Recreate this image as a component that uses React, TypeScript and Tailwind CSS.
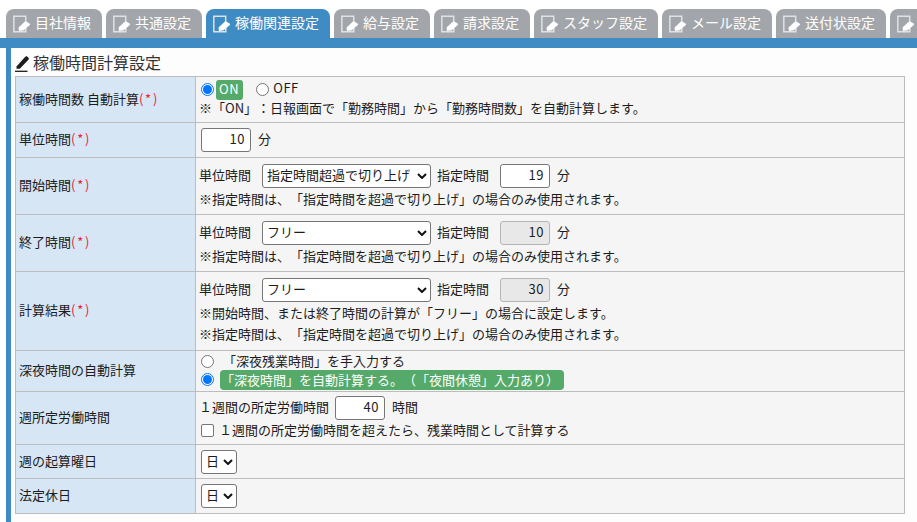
import type { ReactNode } from 'react';

const FONT = '[font-family:"Noto_Sans_CJK_JP","Liberation_Sans",sans-serif]';

const tabs = [
  { name: '目社情報', width: 'w-[96px]' },
  { name: '共通設定', width: 'w-[96px]' },
  { name: '稼働関連設定', width: 'w-[124px]', active: true },
  { name: '給与設定', width: 'w-[96px]' },
  { name: '請求設定', width: 'w-[96px]' },
  { name: 'スタッフ設定', width: 'w-[124px]' },
  { name: 'メール設定', width: 'w-[110px]' },
  { name: '送付状設定', width: 'w-[110px]' },
  { name: '', width: 'w-[40px]' }
];

const TabIcon = () => (
  <svg width="18" height="18" viewBox="0 0 18 18" className="shrink-0">
    <path d="M12.700 6V1.200H.8v15.600h12V13" fill="none" stroke="#dfe2e5" strokeWidth="1.5" />
    <path d="M5.500 12.500l6.500-6 .8-.6 4.400 3.200-.4.900-6 5.200-4.800.8z" fill="#fff" />
  </svg>
);

const Pencil = () => (
  <svg width="14" height="17" viewBox="0 0 14 17" className="shrink-0">
    <path d="M1.500 11.500L10 2l1.500-1L14 3.200l-.6 1.600-8.600 9H1.500z" fill="#1c1c1c" />
    <path d="M0 16.300h12.500" stroke="#1c1c1c" strokeWidth="1.300" />
  </svg>
);

const Req = () => <span className="tracking-[1.8px] text-[#f0203a]">(*)</span>;

const Row = ({ label, h, children }: { label: ReactNode; h: string; children: ReactNode }) => (
  <div className={`flex border-b border-[#bdbdbd] ${h}`}>
    <div className="flex w-[180px] shrink-0 items-center border-r border-[#bdbdbd] bg-[#d6e6f4] pb-[3px] pl-[3px]">
      <span>{label}</span>
    </div>
    <div className="flex min-w-0 grow flex-col justify-center bg-[#f5f5f5] pl-[3px]">{children}</div>
  </div>
);

const Radio = ({ on }: { on?: boolean }) => (
  <span
    className={`flex h-[13px] w-[13px] shrink-0 items-center justify-center rounded-full border bg-white ${
      on ? 'border-[#0075ff]' : 'border-[#767676]'
    }`}
  >
    {on && <span className="h-[9px] w-[9px] rounded-full bg-[#0075ff]" />}
  </span>
);

const Chevron = () => (
  <svg width="10" height="6" viewBox="0 0 10 6" className="shrink-0">
    <path d="M1 1l4 4 4-4" fill="none" stroke="#111" strokeWidth="2" />
  </svg>
);

// 入力欄の文字は枠の中央より少し上に出す
const Select = ({ text, w }: { text: string; w: string }) => (
  <div
    className={`flex h-[24px] items-center justify-between rounded-[3px] border border-[#767676] bg-white pl-[4px] pr-[3px] ${w}`}
  >
    <span className="whitespace-nowrap pb-[3px]">{text}</span>
    <Chevron />
  </div>
);

const NumBox = ({ value, disabled, w = 'w-[50px]' }: { value: string; disabled?: boolean; w?: string }) => (
  <div
    className={`flex h-[24px] items-center justify-end rounded-[3px] border pb-[3px] pr-[5px] tracking-[0.5px] ${w} ${
      disabled ? 'border-[#b5b5b5] bg-[#e8e8e8]' : 'border-[#767676] bg-white'
    }`}
  >
    {value}
  </div>
);

const UnitLine = ({ select, value, disabled }: { select: string; value: string; disabled?: boolean }) => (
  <div className="flex h-[24px] items-center">
    <span className="w-[63px] pb-[3px]">単位時間</span>
    <Select text={select} w="w-[169px]" />
    <span className="ml-[6px] w-[63px] pb-[3px]">指定時間</span>
    <NumBox value={value} disabled={disabled} />
    <span className="ml-[7px] pb-[3px]">分</span>
  </div>
);

const Note = ({ children }: { children: ReactNode }) => (
  <div className="mt-[2px] h-[19px] whitespace-nowrap leading-[17px]">{children}</div>
);

const NOTE_TEXT = '※指定時間は、「指定時間を超過で切り上げ」の場合のみ使用されます。';

export default function App() {
  return (
    <div
      className={`h-[522px] w-[917px] overflow-hidden bg-white text-[13px] leading-[19px] text-[#1c1c1c] [text-spacing-trim:space-all] ${FONT}`}
    >
      <div className="flex h-[38px] gap-[4px] pl-[6px] pt-[9px]">
        {tabs.map((tab, i) => (
          <div
            key={i}
            className={`flex h-[29px] shrink-0 items-center gap-[4px] rounded-t-[8px] pl-[7px] text-[14px] text-white ${tab.width} ${
              tab.active ? 'bg-[#3f8cc4]' : 'bg-[#a2a6aa]'
            }`}
          >
            <TabIcon />
            <span className="whitespace-nowrap pb-[2px]">{tab.name}</span>
          </div>
        ))}
      </div>

      <div className="h-[10px] bg-[#3f8cc4]" />

      <div className="ml-[6px] h-[474px] border-l-[5px] border-[#3f8cc4] bg-[#fdfdfd] pl-[4px]">
        <div className="flex h-[28px] items-center gap-[4px] pt-[3px] text-[16px] text-[#333]">
          <Pencil />
          <span className="pb-[2px]">稼働時間計算設定</span>
        </div>

        <div className="w-[890px] border-l border-r border-t border-[#bdbdbd]">
          <Row label={<>稼働時間数 自動計算<Req /></>} h="h-[46px]">
            <div className="mb-[1px] flex h-[20px] items-center pl-[2px]">
              <Radio on />
              <span className="ml-[2px] h-[20px] rounded-[3px] bg-[#55aa6a] pl-[3px] pr-[4px] leading-[17px] tracking-[0.6px] text-white">ON</span>
              <span className="ml-[13px]"><Radio /></span>
              <span className="ml-[4px] pb-[4px] tracking-[0.5px]">OFF</span>
            </div>
            <div className="h-[19px] whitespace-nowrap leading-[14px]">
              ※「ON」：日報画面で「勤務時間」から「勤務時間数」を自動計算します。
            </div>
          </Row>

          <Row label={<>単位時間<Req /></>} h="h-[35px]">
            <div className="flex items-center pl-[2px]">
              <NumBox value="10" w="w-[50px]" />
              <span className="ml-[7px] pb-[3px]">分</span>
            </div>
          </Row>

          <Row label={<>開始時間<Req /></>} h="h-[57px]">
            <UnitLine select="指定時間超過で切り上げ" value="19" />
            <Note>{NOTE_TEXT}</Note>
          </Row>

          <Row label={<>終了時間<Req /></>} h="h-[57px]">
            <UnitLine select="フリー" value="10" disabled />
            <Note>{NOTE_TEXT}</Note>
          </Row>

          <Row label={<>計算結果<Req /></>} h="h-[79px]">
            <UnitLine select="フリー" value="30" disabled />
            <Note>※開始時間、または終了時間の計算が「フリー」の場合に設定します。</Note>
            <Note>{NOTE_TEXT}</Note>
          </Row>

          <Row label="深夜時間の自動計算" h="h-[41px]">
            <div className="flex h-[17px] items-center pl-[2px]">
              <Radio />
              <span className="ml-[9px] pb-[2px]">「深夜残業時間」を手入力する</span>
            </div>
            <div className="flex h-[19px] items-center pl-[2px]">
              <Radio on />
              <span className="ml-[6px] rounded-[4px] bg-[#55aa6a] pb-[1px] pl-[1px] pr-[5px] text-white">
                「深夜時間」を自動計算する。（「夜間休憩」入力あり）
              </span>
            </div>
          </Row>

          <Row label="週所定労働時間" h="h-[53px]">
            <div className="flex h-[24px] items-center">
              <span className="pb-[3px]">１週間の所定労働時間</span>
              <span className="ml-[6px]"><NumBox value="40" /></span>
              <span className="ml-[7px] pb-[3px]">時間</span>
            </div>
            <div className="mt-[1px] flex h-[19px] items-center pl-[2px]">
              <span className="h-[13px] w-[13px] rounded-[2px] border border-[#767676] bg-white" />
              <span className="ml-[5px] pb-[3px]">１週間の所定労働時間を超えたら、残業時間として計算する</span>
            </div>
          </Row>

          <Row label="週の起算曜日" h="h-[34px]">
            <div className="pl-[2px]"><Select text="日" w="w-[36px]" /></div>
          </Row>

          <Row label="法定休日" h="h-[35px]">
            <div className="pl-[2px]"><Select text="日" w="w-[36px]" /></div>
          </Row>
        </div>
      </div>
    </div>
  );
}
